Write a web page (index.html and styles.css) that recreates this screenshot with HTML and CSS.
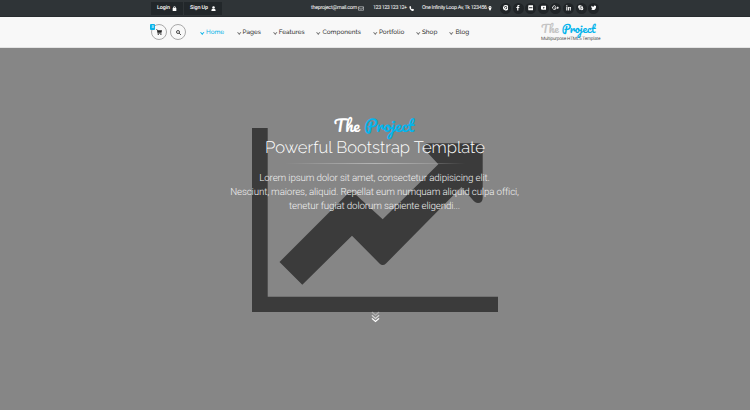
FILE: index.html
```html
<!DOCTYPE html>
<html lang="en">
<head>
<meta charset="utf-8">
<title>The Project</title>
<link rel="stylesheet" href="styles.css">
</head>
<body>
<div class="topbar"><div class="container topbar-row">
  <div class="account">
    <a class="btn login">Login <svg viewBox="0 0 10 10"><path d="M2 4h6v6H2zM3 4V3a2 2 0 0 1 4 0v1" fill="none" stroke="#fff" stroke-width="1.3"/><path d="M2 4h6v6H2z"/></svg></a>
    <a class="btn signup">Sign Up <svg viewBox="0 0 10 10"><circle cx="5" cy="2.8" r="2.5"/><path d="M.8 10Q.4 5.5 3 5.3q2 1.4 4 0Q9.6 5.5 9.2 10z"/></svg></a>
  </div>
  <div class="contact">
    <span class="mail">theproject@mail.com</span><svg class="i-mail" viewBox="0 0 12 10"><path d="M1 1.500h10v7H1zM1 3l5 3.500L11 3" fill="none" stroke="#c8cbcc" stroke-width="1.300"/></svg>
    <span class="phone">123 123 123 12+</span><svg class="i-phone" viewBox="0 0 10 10"><path d="M1 1l2-1 1.500 2.500L3.500 4q1 2 2.500 2.500L7.500 5.500 10 7 9 9.300Q5.500 11 2.300 6.500.5 4 1 1z"/></svg>
    <span class="address">One Infinity Loop Av, Tk 123456</span><svg class="i-pin" viewBox="0 0 8 10"><path fill-rule="evenodd" d="M4 0a3 3 0 0 1 3 3c0 2-3 7-3 7S1 5 1 3a3 3 0 0 1 3-3zm0 2a1 1 0 1 0 0 2 1 1 0 0 0 0-2z"/></svg>
  </div>
  <div class="social">
    <a><svg viewBox="0 0 10 10"><path fill-rule="evenodd" d="M5 0a5 5 0 1 1-1.400 9.800L4.600 7q2.800.8 3.200-2.200Q7.500 2 5 2 2.500 2 2.300 4.500q0 1.200.9 1.700L3.600 5q-.2-2 1.400-2 1.800.3 1.200 2.300Q5.500 6.600 4.800 5.600L3.300 9.700A5 5 0 0 1 5 0z"/></svg></a>
    <a><svg viewBox="0 0 10 10"><path d="M4 10V5.600H2.500V3.800H4V2.500Q4 0 6.500 0H8v1.800H7q-.9 0-.9.900v1.100H8l-.3 1.800H6.100V10z"/></svg></a>
    <a><svg viewBox="0 0 10 10"><path fill-rule="evenodd" d="M1.500.5h7q1 0 1 1v7q0 1-1 1h-7q-1 0-1-1v-7q0-1 1-1zM2 4.200h6v1.500H2z"/></svg></a>
    <a><svg viewBox="0 0 10 10"><path fill-rule="evenodd" d="M1.500 1.500h7Q10 1.500 10 3v4q0 1.500-1.500 1.500h-7Q0 8.500 0 7V3q0-1.500 1.500-1.500zM4 3.300v3.400L7 5z"/></svg></a>
    <a><svg class="wide" viewBox="0 0 13 10"><path d="M7 2.800A3.300 3.300 0 1 0 7.600 5.300H4.500M8.500 5h4M10.500 3v4" fill="none" stroke="#fff" stroke-width="1.600"/></svg></a>
    <a><svg viewBox="0 0 10 10"><path d="M.5 3.500h2V10h-2zM.5.500h2v2h-2zM3.800 3.500h1.900v1Q9.800 2.200 9.800 6v4h-2V6.500Q7.800 4.800 5.800 6v4h-2z"/></svg></a>
    <a><svg viewBox="0 0 10 10"><circle cx="3" cy="3" r="2.700"/><circle cx="7" cy="7" r="2.700"/><circle cx="5" cy="5" r="4"/><path d="M7 3.700Q6.500 2.400 5 2.500 3.200 2.600 3.200 3.800T5 5t1.900 1.300T5 7.500 3 6.300" fill="none" stroke="#24292b"/></svg></a>
    <a><svg viewBox="0 0 10 10"><path d="M.3 8.200q1.700 0 2.700-.8-1.500 0-1.900-1.400H2Q.5 5.400.5 3.700l.8.300Q0 2.800.8 1.200 2.500 3.200 5 3.300 4.700 1 7 1q1 0 1.500.6L9.700 1.200 9 2.400l1-.2-.9 1Q9 9.200 3.500 9.200 1.600 9.200.3 8.200z"/></svg></a>
  </div>
</div></div>
<header class="header"><div class="container header-row">
  <div class="tools">
    <a class="round"><svg viewBox="0 0 12 12"><path d="M0 1h2.600l.5 1.600H12L11 7.500H4.300l.2.900H11v1H3.400L1.800 2.200H0z"/><circle cx="4.500" cy="10.800" r="1.100"/><circle cx="9.800" cy="10.800" r="1.100"/></svg><span class="badge">8</span></a>
    <a class="round"><svg class="glass" viewBox="0 0 10 10"><path d="M6.500 6.500L9.500 9.500" stroke="#222" stroke-width="2"/><circle cx="4" cy="4" r="3" fill="none" stroke="#222" stroke-width="1.600"/></svg></a>
  </div>
  <nav class="nav">
    <a class="n1 active">Home</a><a class="n2">Pages</a><a class="n3">Features</a><a class="n4">Components</a><a class="n5">Portfolio</a><a class="n6">Shop</a><a class="n7">Blog</a>
  </nav>
  <div class="brand"><div class="script small"><span>The</span> <b>Project</b></div><div class="tagline">Multipurpose HTML5 Template</div></div>
</div></header>
<main class="hero">
  <svg class="chart" viewBox="252 128 246 184"><path d="M252 128h15.700v168.700H498V312H252z"/><path d="M279.500 262L348.500 193Q351 190.500 354 193L382.700 219.300 438.300 164.300 426 151Q421 143.300 429 143.300H478Q482.700 143.300 482.700 148V198Q482.500 203 478 203 475 203 472 199L461.500 187 386 263.500Q382.700 266.500 379.500 263.500L352 235.700 302.300 284.700z"/></svg>
  <div class="caption">
    <div class="script big"><span>The</span> <b>Project</b></div>
    <h1>Powerful Bootstrap Template</h1>
    <div class="rule"></div>
    <p><span class="l1">Lorem ipsum dolor sit amet, consectetur adipisicing elit.</span><span class="l2">Nesciunt, maiores, aliquid. Repellat eum numquam aliquid culpa offici,</span><span class="l3">tenetur fugiat dolorum sapiente eligendi...</span></p>
  </div>
  <svg class="down" viewBox="0 0 10 13"><g fill="none" stroke="#fff" stroke-width="1.400"><path d="M1 1l4 3.500L9 1" opacity=".35"/><path d="M1 4.500L5 8l4-3.500" opacity=".65"/><path d="M1 8l4 3.500L9 8"/></g></svg>
</main>
</body>
</html>
```

FILE: styles.css
```css
* { box-sizing: border-box; }
body { margin: 0; width: 750px; height: 410px; overflow: hidden; font-family: Roboto, "Liberation Sans", sans-serif; background: #868686; text-rendering: geometricPrecision; }
svg { display: block; flex: none; fill: #fff; }
.container { width: 450px; margin: 0 auto; display: flex; }
.topbar { height: 17px; background: #2f3437; border-bottom: 1px solid #282c2f; color: #fff; font-size: 5.400px; line-height: 12px; white-space: nowrap; }
.topbar-row { height: 16px; align-items: center; }
.account { display: flex; width: 161px; gap: 1px; padding-left: 1px; }
.btn { display: flex; align-items: center; justify-content: space-between; height: 13px; padding: 0 6px; background: #22272a; font-weight: 500; letter-spacing: -.1px; }
.btn svg { width: 5px; height: 5px; }
.login { width: 32px; }
.signup { width: 38px; }
.contact { display: flex; align-items: center; width: 188px; }
.mail { width: 47px; letter-spacing: -.280px; }
.phone { width: 36px; letter-spacing: -.450px; }
.address { width: 66px; letter-spacing: -.340px; }
.i-mail { width: 6px; height: 5px; margin-right: 9px; }
.i-phone { width: 5px; height: 5px; margin-right: 8px; }
.i-pin { width: 4px; height: 5px; }
.social { display: flex; gap: 1.600px; margin-left: 1px; }
.social a { width: 11px; height: 11px; border-radius: 50%; background: #202427; display: flex; align-items: center; justify-content: center; }
.social svg { width: 5.500px; height: 5.500px; }
.social .wide { width: 7px; }
.header { height: 31px; background: #f8f8f8; border-bottom: 1px solid #e4e4e4; }
.header-row { height: 30px; }
.tools { display: flex; gap: 3px; padding: 7px 0 0 1px; width: 50px; }
.round { position: relative; width: 16px; height: 16px; border: 1px solid #a9a9a9; border-radius: 50%; display: flex; align-items: center; justify-content: center; }
.round svg { width: 6px; height: 6px; fill: #222; }
.round .glass { width: 5px; height: 5px; }
.badge { position: absolute; left: -2px; top: -1px; width: 5px; height: 6px; border-radius: 1px; background: #09b2e8; color: #fff; font-size: 4px; line-height: 6px; text-align: center; }
.nav { display: flex; height: 31px; width: 341px; font: 500 6.350px/12px Raleway, Lato, sans-serif; color: #333; white-space: nowrap; }
.nav a { display: flex; align-items: center; }
.nav a::before { content: ""; width: 1.500px; height: 1.500px; border: solid #777; border-width: 0 .8px .8px 0; transform: rotate(45deg); margin: -1px 2.500px 0 1px; box-sizing: content-box; }
.nav .active { color: #09b2e8; }
.nav .active::before { border-color: #09b2e8; }
.n1 { width: 36.500px; }
.n2 { width: 36.200px; }
.n3 { width: 43.800px; }
.n4 { width: 56.500px; }
.n5 { width: 43px; }
.n6 { width: 33.500px; }
.brand { width: 59px; padding-top: 4px; }
.script { font-family: Pacifico, Lato, cursive; font-weight: 400; white-space: nowrap; }
.script b { color: #05b4ec; font-weight: 400; }
.small { font-size: 11px; line-height: 16px; color: #c4c4c4; }
.tagline { font-size: 4.700px; line-height: 6px; color: #555; white-space: nowrap; letter-spacing: -.200px; }
.hero { height: 362px; display: grid; grid-template-columns: 1fr; justify-items: center; align-items: start; background: #868686; color: #fff; }
.chart { grid-area: 1 / 1; width: 246px; height: 184px; margin-top: 80px; fill: #3b3b3b; }
.caption { grid-area: 1 / 1; z-index: 1; width: 320px; padding-top: 67px; text-align: center; }
.big { font-size: 16.200px; line-height: 22px; padding-right: 2px; }
h1 { margin: 0; font: 300 16.600px/20px Raleway, Lato, sans-serif; white-space: nowrap; }
.rule { width: 180px; height: 1px; margin: 6px auto 8px; background: linear-gradient(90deg, transparent, #b5b5b5, transparent); }
p { margin: 0; padding-right: 1px; font-size: 9.800px; letter-spacing: -.150px; line-height: 14px; font-weight: 300; color: #f0f0f0; }
p span { display: block; white-space: nowrap; }
.down { grid-area: 1 / 1; z-index: 1; width: 9px; height: 12px; margin-top: 263px; }
```
